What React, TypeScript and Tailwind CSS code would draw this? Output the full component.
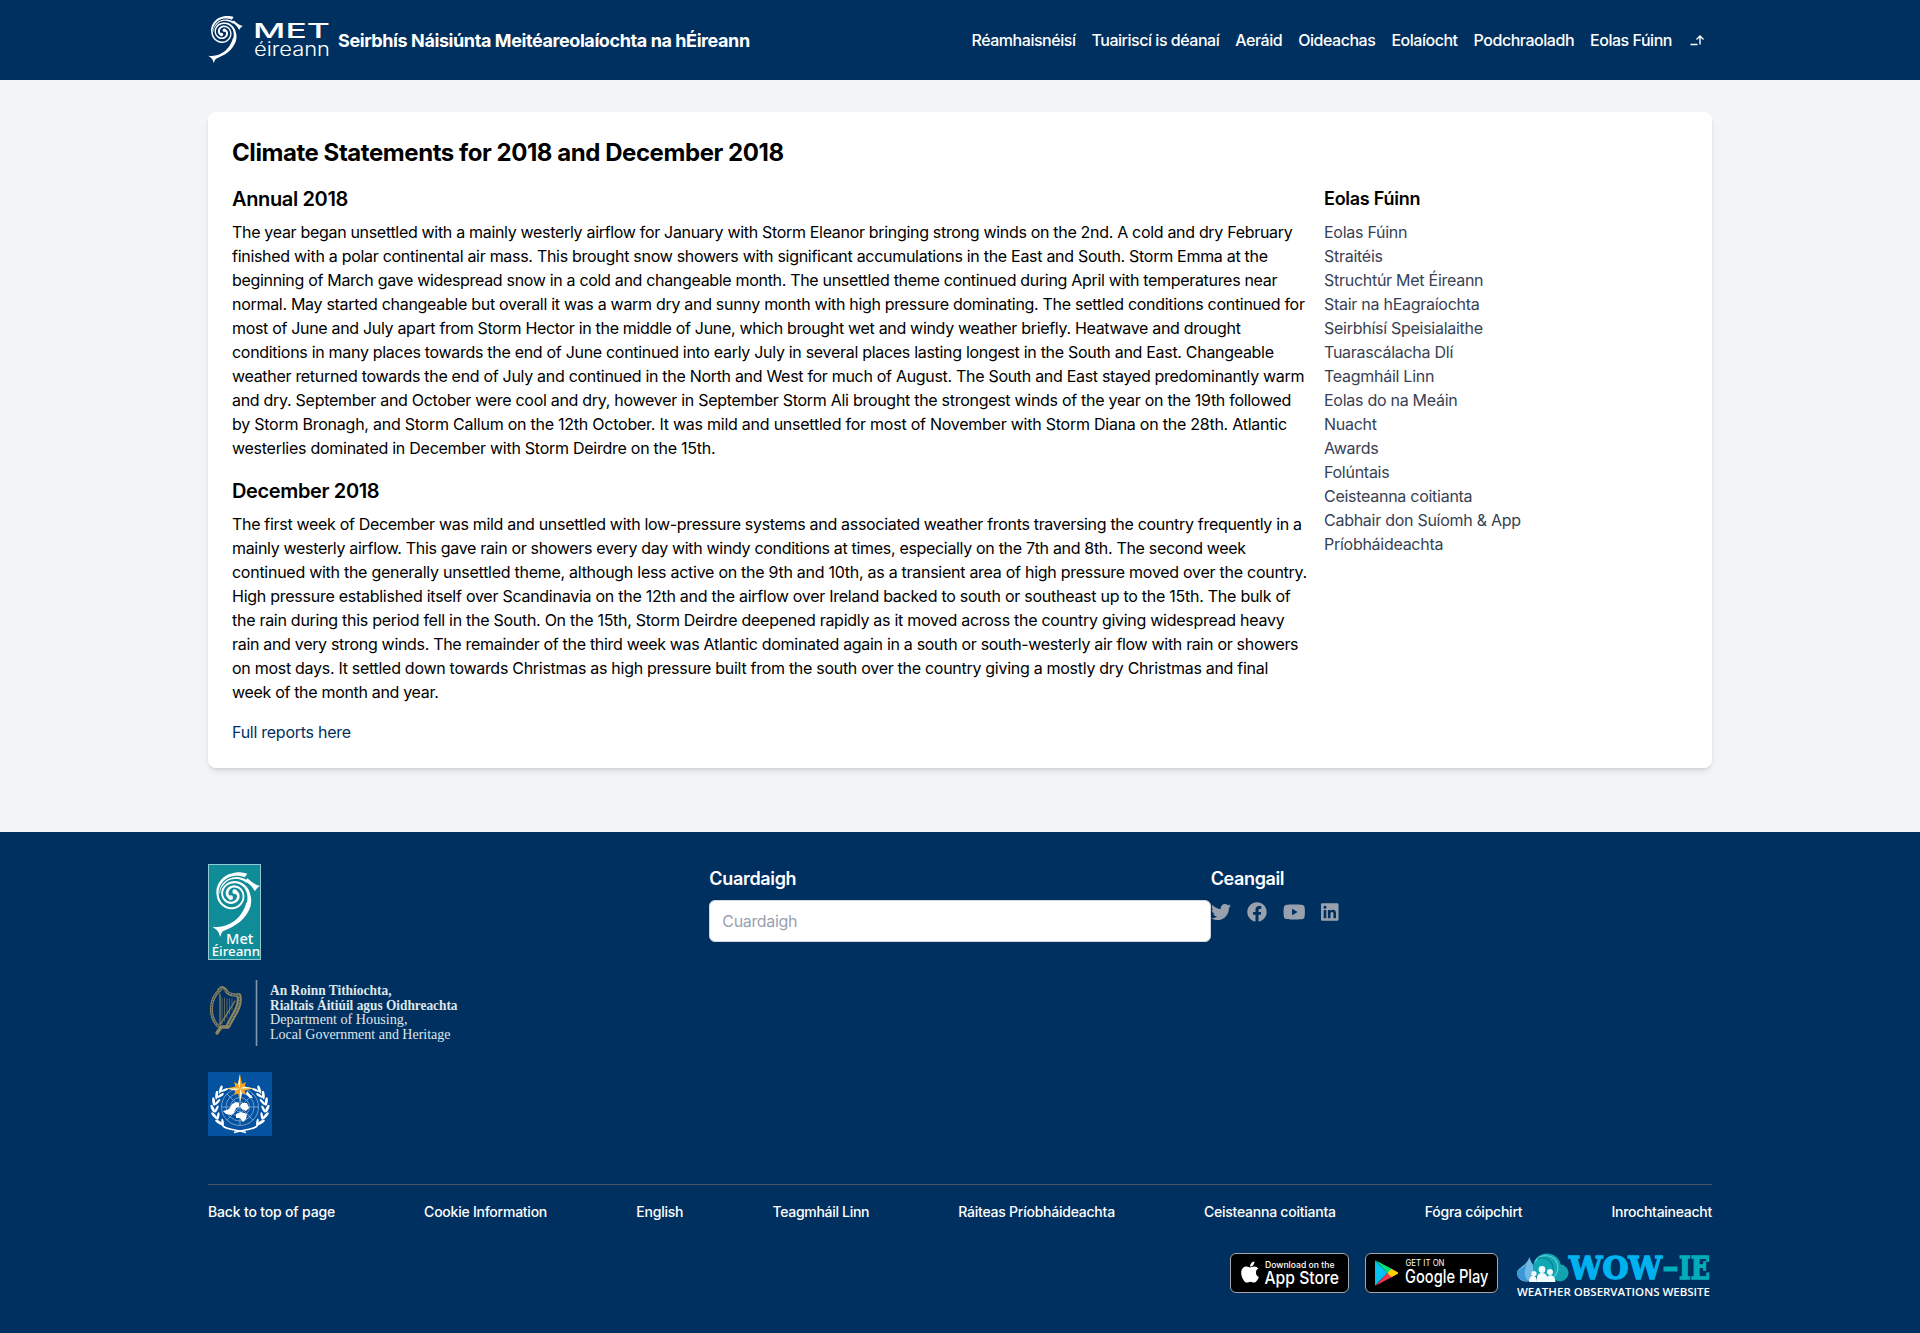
import type { ReactNode, SVGProps } from "react";
import { FaApple, FaFacebook, FaLinkedin, FaTwitter, FaYoutube } from "react-icons/fa";

const NAV = [
  "Réamhaisnéisí",
  "Tuairiscí is déanaí",
  "Aeráid",
  "Oideachas",
  "Eolaíocht",
  "Podchraoladh",
  "Eolas Fúinn",
];

type Line = [className: string, text: string];

const ANNUAL: Line[] = [
  ["tracking-[-0.314px]", "The year began unsettled with a mainly westerly airflow for January with Storm Eleanor bringing strong winds on the 2nd. A cold and dry February"],
  ["tracking-[-0.29px]", "finished with a polar continental air mass. This brought snow showers with significant accumulations in the East and South. Storm Emma at the"],
  ["tracking-[-0.317px]", "beginning of March gave widespread snow in a cold and changeable month. The unsettled theme continued during April with temperatures near"],
  ["tracking-[-0.3px]", "normal. May started changeable but overall it was a warm dry and sunny month with high pressure dominating. The settled conditions continued for"],
  ["tracking-[-0.32px]", "most of June and July apart from Storm Hector in the middle of June, which brought wet and windy weather briefly. Heatwave and drought"],
  ["tracking-[-0.3px]", "conditions in many places towards the end of June continued into early July in several places lasting longest in the South and East. Changeable"],
  ["tracking-[-0.304px]", "weather returned towards the end of July and continued in the North and West for much of August. The South and East stayed predominantly warm"],
  ["tracking-[-0.287px]", "and dry. September and October were cool and dry, however in September Storm Ali brought the strongest winds of the year on the 19th followed"],
  ["tracking-[-0.243px]", "by Storm Bronagh, and Storm Callum on the 12th October. It was mild and unsettled for most of November with Storm Diana on the 28th. Atlantic"],
  ["tracking-[-0.26px]", "westerlies dominated in December with Storm Deirdre on the 15th."],
];

const DECEMBER: Line[] = [
  ["tracking-[-0.312px]", "The first week of December was mild and unsettled with low-pressure systems and associated weather fronts traversing the country frequently in a"],
  ["tracking-[-0.32px]", "mainly westerly airflow. This gave rain or showers every day with windy conditions at times, especially on the 7th and 8th. The second week"],
  ["tracking-[-0.27px]", "continued with the generally unsettled theme, although less active on the 9th and 10th, as a transient area of high pressure moved over the country."],
  ["tracking-[-0.262px]", "High pressure established itself over Scandinavia on the 12th and the airflow over Ireland backed to south or southeast up to the 15th. The bulk of"],
  ["tracking-[-0.278px]", "the rain during this period fell in the South. On the 15th, Storm Deirdre deepened rapidly as it moved across the country giving widespread heavy"],
  ["tracking-[-0.311px]", "rain and very strong winds. The remainder of the third week was Atlantic dominated again in a south or south-westerly air flow with rain or showers"],
  ["tracking-[-0.287px]", "on most days. It settled down towards Christmas as high pressure built from the south over the country giving a mostly dry Christmas and final"],
  ["tracking-[-0.32px]", "week of the month and year."],
];

const SIDE = [
  "Eolas Fúinn",
  "Straitéis",
  "Struchtúr Met Éireann",
  "Stair na hEagraíochta",
  "Seirbhísí Speisialaithe",
  "Tuarascálacha Dlí",
  "Teagmháil Linn",
  "Eolas do na Meáin",
  "Nuacht",
  "Awards",
  "Folúntais",
  "Ceisteanna coitianta",
  "Cabhair don Suíomh & App",
  "Príobháideachta",
];

const FOOT: Line[] = [
  ["tracking-[-0.17px]", "Back to top of page"],
  ["tracking-[-0.24px]", "Cookie Information"],
  ["tracking-[-0.2px]", "English"],
  ["tracking-[-0.3px]", "Teagmháil Linn"],
  ["tracking-[-0.24px]", "Ráiteas Príobháideachta"],
  ["tracking-[-0.24px]", "Ceisteanna coitianta"],
  ["tracking-[-0.24px]", "Fógra cóipchirt"],
  ["tracking-[-0.28px]", "Inrochtaineacht"],
];

type FitProps = SVGProps<SVGTextElement> & { w: number; size: number; children: ReactNode };

/* SVG text set to a fixed width. */
function Fit({ w, size, children, ...rest }: FitProps) {
  return (
    <text textLength={w} lengthAdjust="spacingAndGlyphs" fontSize={size} {...rest}>
      {children}
    </text>
  );
}

/* angle in degrees, radius, half width */
type Knot = [number, number, number];

/* A closed band that follows a spiral through the knots, around (86, 104). */
function band(knots: Knot[]) {
  const outer: string[] = [];
  const inner: string[] = [];
  for (let i = 0; i < knots.length - 1; i++) {
    const [a0, r0, w0] = knots[i];
    const [a1, r1, w1] = knots[i + 1];
    for (let s = 0; s <= 8; s++) {
      const t = s / 8;
      const a = ((a0 + (a1 - a0) * t) * Math.PI) / 180;
      const r = r0 + (r1 - r0) * t;
      const w = w0 + (w1 - w0) * t;
      const p = (q: number) => `${(86 + Math.cos(a) * q).toFixed(1)} ${(104 + Math.sin(a) * q).toFixed(1)}`;
      outer.push(p(r + w));
      inner.unshift(p(r - w));
    }
  }
  return `M${outer.join("L")}L${inner.join("L")}Z`;
}

const ARM_OUT = band([[-250, 9, 5.5], [-180, 16, 4.5], [-90, 24, 3.5], [0, 32, 2.8], [90, 41, 3], [180, 45, 3.2], [225, 51, 4], [270, 60, 4.5], [305, 70, 6.5]]);
const ARM_TAIL = band([[-430, 9, 5.5], [-360, 16, 4.5], [-270, 24, 3.5], [-180, 31.5, 2.8], [-90, 37, 3.2], [-45, 42, 3.6], [0, 48, 4.7], [32, 56, 7], [40, 58, 7]]);
const ARM_RIBBON = band([[185, 39, 0.8], [225, 42, 2], [270, 49, 2.5], [318, 58, 4]]);

function Swirl() {
  return (
    <g fill="#fff">
      <path d={ARM_OUT} />
      <path d={ARM_TAIL} />
      <path d={ARM_RIBBON} />
      <circle cx="80" cy="113" r="7" />
      <circle cx="92" cy="95" r="7" />
      <path d="M123 64 L130 55 C142 66 154 74 168 78 C160 82 156 88 153 94 C146 82 138 72 123 64 Z" />
      <path d="M140 137 C126 182 92 198 58 213 C53 217 51 222 49 231 L43 216 C38 208 31 204 25 200 C44 203 64 199 80 190 C106 176 120 152 127 128 Z" />
    </g>
  );
}

function HeaderLogo() {
  return (
    <svg width="122" height="48" viewBox="0 0 122 48" className="shrink-0 overflow-visible">
      <svg x="0" y="0" width="35" height="47.5" viewBox="25 37 143 195">
        <Swirl />
      </svg>
      <g fill="#fff" fontFamily="Inter, sans-serif">
        <Fit x={45} y={21.7} w={77} size={20.5} fontWeight="500">MET</Fit>
        <Fit x={46} y={40.3} w={76} size={18.5} fontWeight="300">éireann</Fit>
      </g>
    </svg>
  );
}

function TealLogo() {
  return (
    <svg width="53" height="96" viewBox="12 12 159 288">
      <rect x="13.5" y="13.5" width="156" height="285" fill="#108c99" stroke="#8fcbd1" strokeWidth="3" />
      <Swirl />
      <g fill="#fff" fontFamily="'Noto Sans', sans-serif" fontWeight="500">
        <Fit x={66} y={252} w={82} size={45}>Met</Fit>
        <Fit x={23} y={288} w={145} size={37}>Éireann</Fit>
      </g>
    </svg>
  );
}

function DepartmentLogo() {
  return (
    <svg width="252" height="80" viewBox="0 0 252 80">
      <g fill="none" stroke="#8d8662" strokeLinejoin="round" strokeLinecap="round">
        <path strokeWidth="3" d="M10 50 C0 40 2 22 12 14" />
        <path strokeWidth="3.4" d="M11 14 C14 10 17 12 19 16 C23 20 27 19 31 19" />
        <path strokeWidth="5" d="M31 20 C33 30 26 38 20 50" />
        <path
          strokeWidth="1.2"
          stroke="#2a4a63"
          strokeDasharray="1 1.8"
          d="M31 20 C33 30 26 38 20 50 M10 50 C0 40 2 22 12 14 M12 13 C16 10 20 21 31 19"
        />
        <path strokeWidth="3.4" d="M20 51 L13 51 L9 57" />
        <path strokeWidth="1" d="M14 22 V48 M16.5 22 V45 M19 23 V42 M21.5 23 V38 M24 23 V34" opacity=".6" />
        <path strokeWidth="1.2" d="M12 18 V49 L27 25" />
      </g>
      <path d="M48.5 4V70" stroke="#8098b0" strokeWidth="1.6" />
      <g fill="#dfe6ec" fontFamily="'Liberation Serif', serif">
        <Fit x={62} y={19.2} w={121.5} size={13.6} fontWeight="700">An Roinn Tithíochta,</Fit>
        <Fit x={62} y={33.7} w={187.5} size={13.6} fontWeight="700">Rialtais Áitiúil agus Oidhreachta</Fit>
        <Fit x={62} y={48.3} w={137.5} size={14}>Department of Housing,</Fit>
        <Fit x={62} y={62.8} w={180.5} size={14}>Local Government and Heritage</Fit>
      </g>
    </svg>
  );
}

const LEAVES = [
  [11, 50, 35],
  [6.5, 43.5, 18],
  [5, 36.5, 2],
  [6, 29.5, -14],
  [9, 23, -28],
  [13, 17.5, -40],
];

function Laurel() {
  return (
    <g fill="#fff">
      {LEAVES.map(([x, y, a]) => (
        <g key={y}>
          <ellipse cx={x - 0.3} cy={y} rx="1.4" ry="4.2" transform={`rotate(${-a - 22} ${x} ${y})`} />
          <ellipse cx={x + 3.6} cy={y + 0.5} rx="1.2" ry="3.8" transform={`rotate(${-a + 28} ${x + 3.6} ${y + 0.5})`} />
        </g>
      ))}
      <path d="M14 53 C18 58 25 57 38 60.5" fill="none" stroke="#fff" strokeWidth="1.6" />
    </g>
  );
}

function WmoLogo() {
  return (
    <svg width="64" height="64" viewBox="0 0 64 64">
      <rect width="64" height="64" fill="#0452a0" />
      <g fill="none" stroke="#7aa6d4" strokeWidth=".9">
        <circle cx="32" cy="35" r="18.5" />
        <circle cx="32" cy="35" r="14" />
        <circle cx="32" cy="35" r="9.5" />
        <circle cx="32" cy="35" r="5" />
        <path d="M13.5 35H50.5M32 16.5V53.5M19 22L45 48M45 22L19 48" />
      </g>
      <g fill="#fff">
        <path d="M24 32 L28 30 L31 31 L31 35 L28 36 L26 41 L23 43 L18 42 L15 39 L19 38 L22 36 Z" />
        <path d="M34 31 L39 31 L41 36 L38 39 L34 37 L32 34 Z" />
        <path d="M28 42 L33 40 L39 42 L38 47 L35 50 L32 46 L28 46 Z" />
        <path d="M39 19 L45 26 L42 26 L38 22 Z" />
      </g>
      <Laurel />
      <g transform="translate(64 0) scale(-1 1)">
        <Laurel />
      </g>
      <path
        fill="#f6a623"
        d="M32 2 L34 12 L38 10 L36.5 14.5 L46 16.5 L36.5 18.5 L38 23 L34 21 L32 30 L30 21 L26 23 L27.5 18.5 L18 16.5 L27.5 14.5 L26 10 L30 12 Z"
      />
      <path
        fill="#fff6dc"
        d="M32 2 L32 16.5 L30 12 Z M46 16.5 L32 16.5 L36.5 14.5 Z M32 30 L32 16.5 L34 21 Z M18 16.5 L32 16.5 L27.5 18.5 Z"
      />
    </svg>
  );
}

function AppStore() {
  return (
    <div className="relative h-10 w-[119px] rounded-md border border-[#a6a6a6] bg-black">
      <FaApple className="absolute top-[6px] left-[7px] size-6 text-white" />
      <svg width="117" height="38" viewBox="0 0 117 38" className="overflow-visible" fill="#fff" fontFamily="Inter, sans-serif">
        <Fit x={34} y={14} w={69.5} size={8.8} fontWeight="500">Download on the</Fit>
        <Fit x={33.5} y={29.5} w={74.5} size={17.5} fontWeight="500">App Store</Fit>
      </svg>
    </div>
  );
}

function GooglePlay() {
  return (
    <div className="mr-[18px] ml-4 h-10 w-[133px] rounded-md border border-[#a6a6a6] bg-black">
      <svg width="131" height="38" viewBox="0 0 131 38" className="overflow-visible" fontFamily="Inter, sans-serif">
        <path fill="#00c3f5" d="M9 6.500 L21.500 19 L9 31.500 Z" />
        <path fill="#00e27a" d="M9 6 L26 15 L21.500 19 Z" />
        <path fill="#f5344c" d="M9 32 L26 23 L21.500 19 Z" />
        <path fill="#ffcf00" d="M25.500 14.700 L31.800 18.300 Q32.600 19 31.800 19.700 L25.500 23.300 L21.300 19 Z" />
        <g fill="#fff">
          <Fit x={39.5} y={12.3} w={39} size={9}>GET IT ON</Fit>
          <Fit x={39} y={29} w={83.5} size={18} fontWeight="500">Google Play</Fit>
        </g>
      </svg>
    </div>
  );
}

function WowLogo() {
  return (
    <svg width="196" height="46" viewBox="0 0 196 46" className="overflow-visible">
      <path fill="#6fb9e4" d="M13.500 4 C15 11 20 14 20 20 C20 26 14 28.500 10 28.500 C4 28.500 1 24 1 20 C1 14 10 14 13.500 4 Z" />
      <path fill="#3d97d4" d="M12 9 C8 16 1 15 1 21 C2 27 9 29 13 28 C7 24 8 16 12 9 Z" />
      <circle cx="44" cy="20" r="8.5" fill="#12a3af" />
      <circle cx="31" cy="14.5" r="14" fill="#12a7b5" />
      <path fill="none" stroke="#5cd0d6" strokeWidth="1.2" d="M19 9 C24 0 38 1 41 10 C44 19 38 26 32 26" />
      <path fill="none" stroke="#0b8a9a" strokeWidth="1.5" d="M22 6 C31 2 40 10 36 21" />
      <g fill="#f1fbfd">
        <circle cx="26" cy="16.5" r="3.4" />
        <circle cx="34" cy="19" r="3" />
        <circle cx="18" cy="20.5" r="2.6" />
        <path d="M20.500 29 C20 22 23 20 26 20 C29 20 31 22 31 24 C34 20.500 39 22 39.500 28.500 L39 29 Z" />
        <path d="M13 29 C13 23 17 22 20 24 L21 29 Z" />
      </g>
      <g fontWeight="700" fontFamily="'DejaVu Serif', serif" strokeWidth="1.5">
        <Fit x={53} y={25.5} w={93} size={31.5} fill="#00b3f0" stroke="#00b3f0">WOW</Fit>
        <rect x="147.5" y="13.5" width="14" height="5" fill="#00adbb" stroke="none" />
        <Fit x={163} y={25.5} w={31} size={31.5} fill="#00adbb" stroke="#00adbb">IE</Fit>
      </g>
      <Fit x={1} y={42.5} w={193} size={11} fill="#fff" fontFamily="'Open Sans', sans-serif" fontWeight="600">
        WEATHER OBSERVATIONS WEBSITE
      </Fit>
    </svg>
  );
}

function Lines({ lines }: { lines: Line[] }) {
  return (
    <p className="whitespace-nowrap">
      {lines.map(([tracking, text]) => (
        <span key={text} className={`block ${tracking}`}>{text}</span>
      ))}
    </p>
  );
}

export default function App() {
  return (
    <div className="flex min-h-[1333px] flex-col bg-[#f3f4f6] font-[Inter,sans-serif] text-base text-black">
      <header className="h-20 bg-[#00305f] text-white">
        <div className="mx-auto flex h-full w-[1504px] items-center justify-between">
          <div className="flex items-center gap-2">
            <HeaderLogo />
            <span className="mt-0.5 text-lg font-bold tracking-[-0.41px]">Seirbhís Náisiúnta Meitéareolaíochta na hÉireann</span>
          </div>
          <nav className="flex items-center gap-4 font-medium tracking-[-0.47px]">
            {NAV.map((n) => (
              <a key={n}>{n}</a>
            ))}
            <svg width="24" height="24" viewBox="0 0 24 24" fill="none" stroke="#fff" strokeWidth="1.4">
              <path d="M2.500 16.500H9.500M12 16.500V9M8.500 11.500L12 8L15.500 11.500" />
            </svg>
          </nav>
        </div>
      </header>

      <main className="mx-auto mt-8 mb-16 w-[1504px] rounded-lg bg-white p-6 shadow-md">
        <h1 className="pt-px text-2xl leading-[31px] font-bold tracking-[-0.44px]">Climate Statements for 2018 and December 2018</h1>
        <div className="mt-4 grid grid-cols-4">
          <article className="col-span-3">
            <h2 className="mb-[7px] pt-px text-xl font-semibold tracking-[-0.36px]">Annual 2018</h2>
            <Lines lines={ANNUAL} />
            <h2 className="mt-[17px] mb-[7px] text-xl font-semibold tracking-[-0.36px]">December 2018</h2>
            <Lines lines={DECEMBER} />
            <a className="mt-4 block tracking-[-0.265px] text-[#00305f]">Full reports here</a>
          </article>
          <aside>
            <h3 className="mb-[7px] pt-px text-lg font-semibold tracking-[-0.26px]">Eolas Fúinn</h3>
            <ul className="tracking-[-0.27px] text-gray-700">
              {SIDE.map((s) => (
                <li key={s}>{s}</li>
              ))}
            </ul>
          </aside>
        </div>
      </main>

      <footer className="grow bg-[#00305f] pt-8 text-white">
        <div className="mx-auto w-[1504px]">
          <div className="grid grid-cols-3">
            <div className="flex flex-col gap-4">
              <TealLogo />
              <DepartmentLogo />
              <WmoLogo />
            </div>
            <div>
              <h3 className="pt-px text-lg font-semibold tracking-[-0.33px]">Cuardaigh</h3>
              <input
                placeholder="Cuardaigh"
                className="mt-[7px] block h-[42px] w-full rounded-md border border-gray-300 bg-white px-3 tracking-[-0.34px] placeholder:text-gray-400"
              />
            </div>
            <div>
              <h3 className="pt-px text-lg font-semibold tracking-[-0.36px]">Ceangail</h3>
              <div className="mt-[9px] flex gap-4 text-gray-400">
                <FaTwitter className="h-5 w-5" />
                <FaFacebook className="h-5 w-5" />
                <FaYoutube className="h-5 w-[22.5px]" />
                <FaLinkedin className="h-5 w-[17.5px]" />
              </div>
            </div>
          </div>
          <div className="mt-12 flex justify-between border-t border-gray-600 pt-[17px] text-sm font-medium">
            {FOOT.map(([tracking, text]) => (
              <a key={text} className={tracking}>{text}</a>
            ))}
          </div>
          <div className="mt-[31px] flex justify-end">
            <AppStore />
            <GooglePlay />
            <WowLogo />
          </div>
        </div>
      </footer>
    </div>
  );
}
